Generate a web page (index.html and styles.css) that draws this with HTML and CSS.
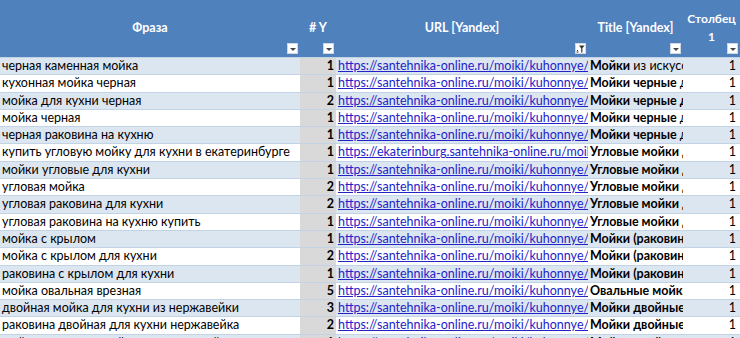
FILE: index.html
```html
<!DOCTYPE html>
<html lang="ru">
<head>
<meta charset="utf-8">
<link rel="stylesheet" href="styles.css">
</head>
<body>
<div class="sheet">
  <div class="head">
    <div class="hc"><div class="ht">Фраза</div><div class="fb"><span class="arr"></span></div></div>
    <div class="hc"><div class="ht">#&nbsp;Y</div><div class="fb"><span class="arr"></span></div></div>
    <div class="hc"><div class="ht">URL [Yandex]</div><div class="fb fb-filter"><svg width="9" height="9" viewBox="0 0 9 9"><rect x="1" y="6" width="1" height="1" fill="#333"/><rect x="0.5" y="7.5" width="2" height="1" fill="#333"/><path d="M3 1.5h5.5L6.4 4.2V8.5H5.2V4.2Z" fill="#333"/></svg></div></div>
    <div class="hc"><div class="ht">Title [Yandex]</div><div class="fb"><span class="arr"></span></div></div>
    <div class="hc"><div class="ht ht-narrow">Столбец<br>1</div><div class="fb"><span class="arr"></span></div></div>
  </div>

  <div class="row band"><div class="c">черная каменная мойка</div><div class="c n">1</div><div class="c u"><a href="#">https://santehnika-online.ru/moiki/kuhonnye/iz_iskusstvennogo_kamnya/</a></div><div class="c t"><b>Мойки</b> из искусственного камня для кухни</div><div class="c r">1</div></div>
  <div class="row"><div class="c">кухонная мойка черная</div><div class="c n">1</div><div class="c u"><a href="#">https://santehnika-online.ru/moiki/kuhonnye/chernye/</a></div><div class="c t"><b>Мойки черные</b> для кухни</div><div class="c r">1</div></div>
  <div class="row band"><div class="c">мойка для кухни черная</div><div class="c n">2</div><div class="c u"><a href="#">https://santehnika-online.ru/moiki/kuhonnye/chernye/</a></div><div class="c t"><b>Мойки черные для кухни</b></div><div class="c r">1</div></div>
  <div class="row"><div class="c">мойка черная</div><div class="c n">1</div><div class="c u"><a href="#">https://santehnika-online.ru/moiki/kuhonnye/chernye/</a></div><div class="c t"><b>Мойки черные</b> для кухни</div><div class="c r">1</div></div>
  <div class="row band"><div class="c">черная раковина на кухню</div><div class="c n">1</div><div class="c u"><a href="#">https://santehnika-online.ru/moiki/kuhonnye/chernye/</a></div><div class="c t"><b>Мойки черные</b> для кухни</div><div class="c r">1</div></div>
  <div class="row"><div class="c">купить угловую мойку для кухни в екатеринбурге</div><div class="c n">1</div><div class="c u"><a href="#">https://ekaterinburg.santehnika-online.ru/moiki/kuhonnye/uglovye/</a></div><div class="c t"><b>Угловые мойки для кухни</b></div><div class="c r">1</div></div>
  <div class="row band"><div class="c">мойки угловые для кухни</div><div class="c n">1</div><div class="c u"><a href="#">https://santehnika-online.ru/moiki/kuhonnye/uglovye/</a></div><div class="c t"><b>Угловые мойки для кухни</b></div><div class="c r">1</div></div>
  <div class="row"><div class="c">угловая мойка</div><div class="c n">2</div><div class="c u"><a href="#">https://santehnika-online.ru/moiki/kuhonnye/uglovye/</a></div><div class="c t"><b>Угловые мойки для кухни</b></div><div class="c r">1</div></div>
  <div class="row band"><div class="c">угловая раковина для кухни</div><div class="c n">2</div><div class="c u"><a href="#">https://santehnika-online.ru/moiki/kuhonnye/uglovye/</a></div><div class="c t"><b>Угловые мойки для кухни</b></div><div class="c r">1</div></div>
  <div class="row"><div class="c">угловая раковина на кухню купить</div><div class="c n">1</div><div class="c u"><a href="#">https://santehnika-online.ru/moiki/kuhonnye/uglovye/</a></div><div class="c t"><b>Угловые мойки для кухни</b></div><div class="c r">1</div></div>
  <div class="row band"><div class="c">мойка с крылом</div><div class="c n">1</div><div class="c u"><a href="#">https://santehnika-online.ru/moiki/kuhonnye/s_krylom/</a></div><div class="c t"><b>Мойки (раковины) с крылом</b></div><div class="c r">1</div></div>
  <div class="row"><div class="c">мойка с крылом для кухни</div><div class="c n">2</div><div class="c u"><a href="#">https://santehnika-online.ru/moiki/kuhonnye/s_krylom/</a></div><div class="c t"><b>Мойки (раковины) с крылом</b></div><div class="c r">1</div></div>
  <div class="row band"><div class="c">раковина с крылом для кухни</div><div class="c n">1</div><div class="c u"><a href="#">https://santehnika-online.ru/moiki/kuhonnye/s_krylom/</a></div><div class="c t"><b>Мойки (раковины) с крылом</b></div><div class="c r">1</div></div>
  <div class="row"><div class="c">мойка овальная врезная</div><div class="c n">5</div><div class="c u"><a href="#">https://santehnika-online.ru/moiki/kuhonnye/ovalnye/</a></div><div class="c t"><b>Овальные мойки</b> для кухни</div><div class="c r">1</div></div>
  <div class="row band"><div class="c">двойная мойка для кухни из нержавейки</div><div class="c n">3</div><div class="c u"><a href="#">https://santehnika-online.ru/moiki/kuhonnye/iz_nerzhaveyushchey_stali/dvojnye/</a></div><div class="c t"><b>Мойки двойные</b></div><div class="c r">1</div></div>
  <div class="row"><div class="c">раковина двойная для кухни нержавейка</div><div class="c n">2</div><div class="c u"><a href="#">https://santehnika-online.ru/moiki/kuhonnye/iz_nerzhaveyushchey_stali/dvojnye/</a></div><div class="c t"><b>Мойки двойные</b></div><div class="c r">1</div></div>
  <div class="row band"><div class="c">мойка кухонная двойная из нержавейки</div><div class="c n">1</div><div class="c u"><a href="#">https://santehnika-online.ru/moiki/kuhonnye/iz_nerzhaveyushchey_stali/dvojnye/</a></div><div class="c t"><b>Мойки двойные</b></div><div class="c r">1</div></div>
</div>
</body>
</html>
```

FILE: styles.css
```css
html, body {
  margin: 0;
  padding: 0;
  background: #ffffff;
  overflow: hidden;
}

.sheet {
  width: 740px;
  height: 338px;
  overflow: hidden;
  font-family: Lato, "Liberation Sans", sans-serif;
  font-size: 12.5px;
  color: #000;
}

.head,
.row {
  display: grid;
  grid-template-columns: 300px 36px 252px 95px 57px;
}

.head {
  height: 57px;
  background: #4f81bd;
  color: #ffffff;
  font-weight: 700;
  font-size: 12.5px;
}

.hc {
  display: grid;
  min-width: 0;
}

.ht,
.fb {
  grid-area: 1 / 1;
}

.ht {
  align-self: center;
  justify-self: center;
  text-align: center;
  line-height: 18px;
  padding-bottom: 1px;
  white-space: nowrap;
}

.ht-narrow {
  font-size: 12px;
}

.fb {
  align-self: end;
  justify-self: end;
  width: 11px;
  height: 11px;
  margin: 0 2px 3px 0;
  background: #ffffff;
  box-sizing: border-box;
  border: 1px solid #d0d7e2;
  display: flex;
  align-items: center;
  justify-content: center;
}

.arr {
  width: 0;
  height: 0;
  border-left: 3px solid transparent;
  border-right: 3px solid transparent;
  border-top: 3px solid #444;
  margin-top: 1px;
}

.row {
  height: 17.3px;
  box-sizing: border-box;
  border-top: 1px solid #c3d3e6;
  background: #ffffff;
}

.row.band {
  background: #dce6f1;
}

.c {
  min-width: 0;
  overflow: hidden;
  white-space: nowrap;
  padding: 0 2px;
  line-height: 16px;
}

.n {
  background: #d9d9d9;
  text-align: right;
  font-weight: 700;
  padding-right: 2px;
}

.u a {
  color: #2323c8;
  text-decoration: underline;
}

.t b {
  font-weight: 700;
}

.r {
  text-align: right;
  padding-right: 4px;
}
```
